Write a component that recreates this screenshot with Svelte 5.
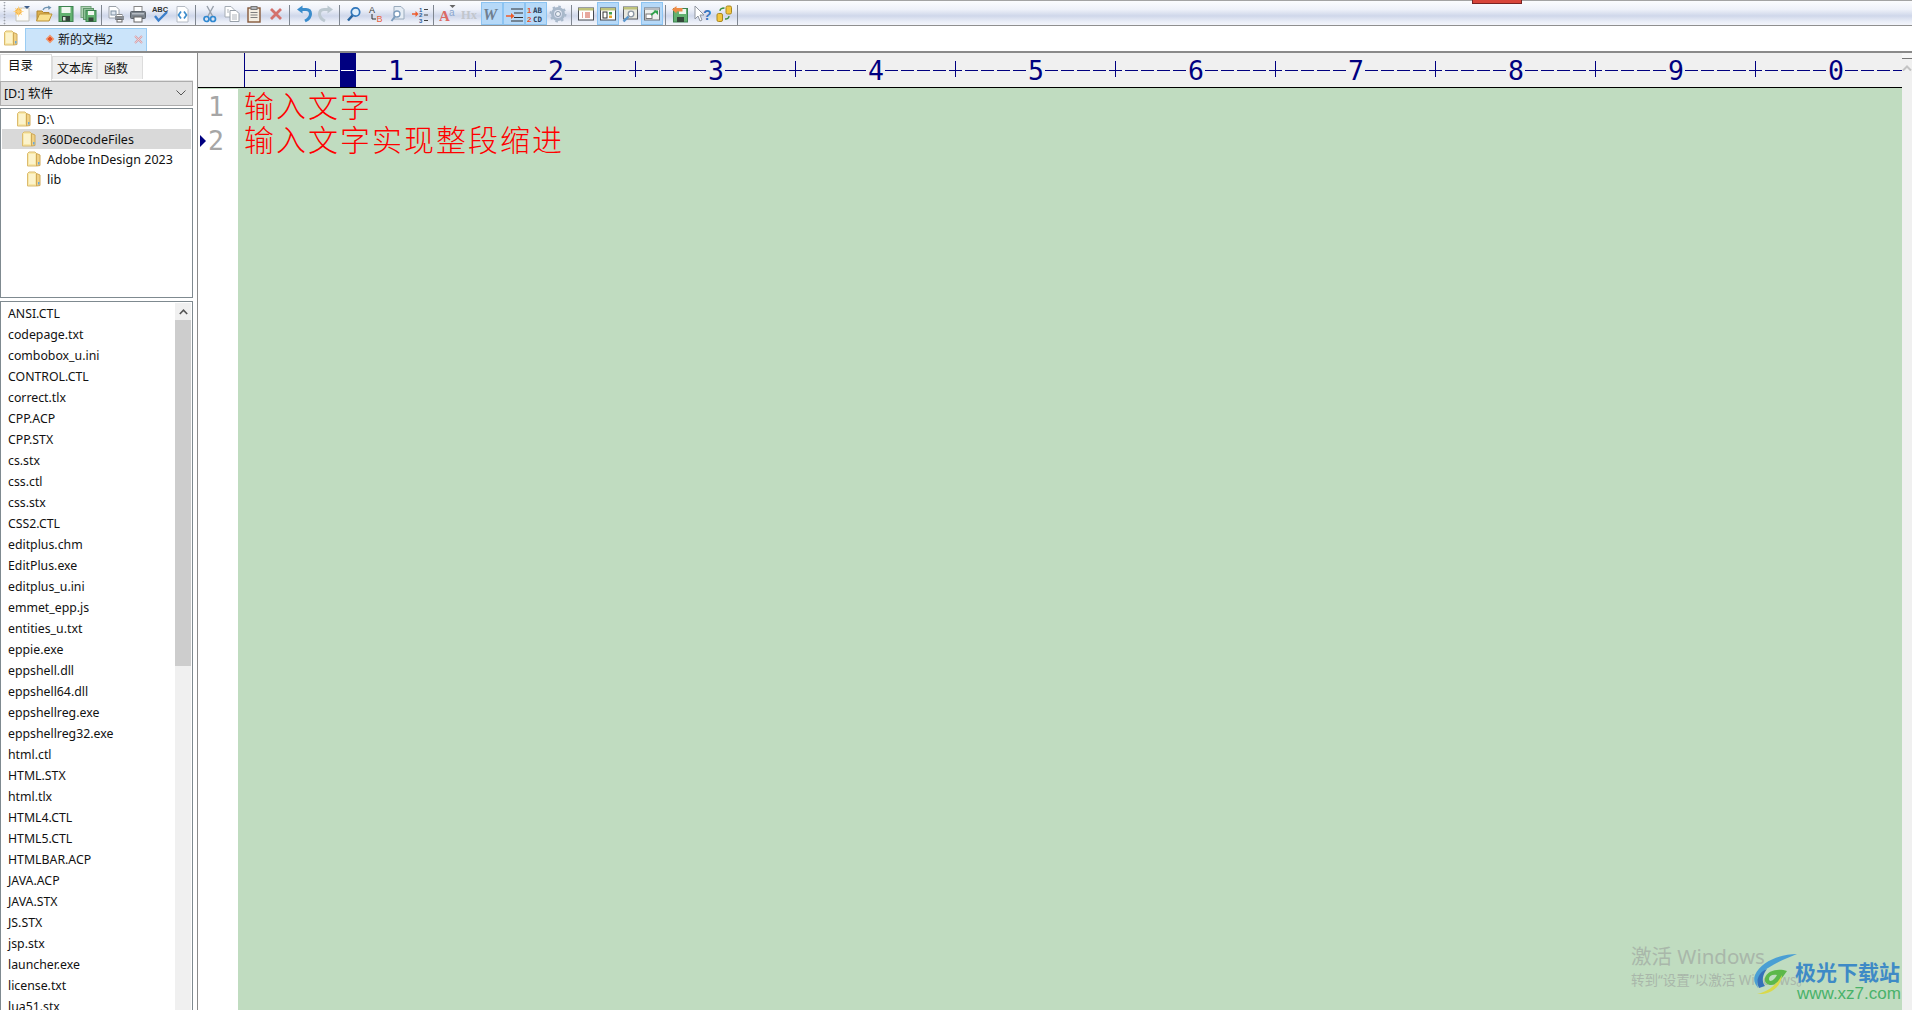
<script>
  // toolbar icons, 18x18 box
  const icons = {
    new: '<path d="M5 3h11v13H3V5z" fill="#fbfbf8" stroke="#c4c4bc"/><path d="M11 1h6l-3 3z" fill="#3f5f8c"/><circle cx="5.500" cy="6.500" r="3.200" fill="#fab548"/><path d="M5.500 1.500v10M.5 6.500h10M2 3l7 7M9 3l-7 7" stroke="#fbd07a" stroke-width=".8"/>',
    open: '<path d="M2 6h5l1.500 1.500H14v8H2z" fill="#dcae4c" stroke="#b08530"/><path d="M4.500 9H17l-3 7H1.500z" fill="#f9e08e" stroke="#bb9236"/><path d="M8 5c1-2.500 3.500-3 6-2.500" fill="none" stroke="#6f94b2" stroke-width="1.300"/><path d="M13 .5l3.500 2-3 2.500z" fill="#6f94b2"/>',
    save: '<rect x="2" y="1.500" width="14" height="15" fill="#62b170" stroke="#3d8350"/><rect x="4.500" y="2" width="9" height="6" fill="#f0f7f0"/><rect x="5" y="11" width="8" height="5.500" fill="#34483b"/><rect x="6" y="12" width="2.500" height="3.500" fill="#d9e3d9"/>',
    saveall: '<rect x="2" y="1.500" width="10" height="11" fill="#b0d2b4" stroke="#74a47e"/><rect x="4.500" y="3.500" width="10" height="11" fill="#8fc298" stroke="#5f9569"/><rect x="7" y="5.500" width="10" height="11" fill="#62b170" stroke="#3d8350"/><rect x="9" y="6" width="6" height="4" fill="#f0f7f0"/><rect x="9.500" y="12.500" width="5" height="4" fill="#34483b"/>',
    preview: '<path d="M2 1.500h7l3 3V13H2z" fill="#fff" stroke="#9aa0a8"/><rect x="4" y="6" width="5" height="4" fill="#dfe6ef" stroke="#7f90a2"/><rect x="8" y="11" width="9" height="4" fill="#8a8f96"/><rect x="10" y="9.500" width="5" height="2" fill="#fff" stroke="#888"/><rect x="10" y="14.500" width="5" height="2.500" fill="#fff" stroke="#666"/>',
    print: '<rect x="5" y="1.500" width="8" height="6" fill="#fff" stroke="#888"/><rect x="1.500" y="6.500" width="15" height="7" rx="1" fill="#7d858e" stroke="#5c636b"/><rect x="3" y="8" width="12" height="1.500" fill="#b6bcc3"/><rect x="5" y="12" width="8" height="5" fill="#fff" stroke="#666"/>',
    spell: '<text x="9" y="7" text-anchor="middle" font-family="Liberation Sans" font-size="7.500" font-weight="700" fill="#333">ABC</text><path d="M4 11l3.500 4.500L16 7" fill="none" stroke="#3c7fcb" stroke-width="2.400"/>',
    browser: '<path d="M4 1.500h8l3 3V17H4z" fill="#fff" stroke="#b4bac3"/><path d="M8 6.500L5.500 10 8 13.500M11 6.500l2.500 3.500-2.500 3.500" fill="none" stroke="#3b8bcc" stroke-width="1.700"/>',
    cut: '<path d="M12.500 1L7 11M6 1l5.500 10" stroke="#98a0aa" stroke-width="1.400"/><circle cx="5.500" cy="14" r="2.500" fill="none" stroke="#2f88d0" stroke-width="1.700"/><circle cx="12" cy="14" r="2.500" fill="none" stroke="#2f88d0" stroke-width="1.700"/>',
    copy: '<path d="M2 1.500h6l3 3V12H2z" fill="#fff" stroke="#a5acb4"/><path d="M7 5.500h6l3 3v8H7z" fill="#fff" stroke="#98a0a9"/><path d="M9 10h5M9 12h5M9 14h5M4 5h2M4 7h2" stroke="#afb5bc"/>',
    paste: '<rect x="3" y="3" width="12" height="14" fill="#f5efe3" stroke="#86593a" stroke-width="1.400"/><rect x="6" y="1.500" width="6" height="3" fill="#b1b5bb" stroke="#777"/><path d="M5.500 7.500h7M5.500 10h7M5.500 12.500h7" stroke="#808080"/>',
    del: '<path d="M4 4l10 10M14 4L4 14" stroke="#d4716c" stroke-width="2.800"/>',
    undo: '<path d="M6 4.500h5c3 0 4.500 2 4.500 4.500s-1.500 5-5.500 7" fill="none" stroke="#3a8ccc" stroke-width="3"/><path d="M7.500 .5v8L2 4.500z" fill="#3a8ccc"/>',
    redo: '<path d="M12 4.500H7C4 4.500 2.500 6.500 2.500 9s1.500 5 5.500 7" fill="none" stroke="#bcc8d0" stroke-width="3"/><path d="M10.500 .5v8L16 4.500z" fill="#bcc8d0"/>',
    find: '<circle cx="10.500" cy="7" r="4.200" fill="#dfeefb" stroke="#2f76bb" stroke-width="1.700"/><path d="M7.500 10.500L3 15.500" stroke="#26639f" stroke-width="2.500"/>',
    replace: '<text x="2" y="8" font-family="Liberation Sans" font-size="9" fill="#333">A</text><path d="M5 9v5h4" fill="none" stroke="#333"/><text x="9.500" y="17" font-family="Liberation Sans" font-size="9" fill="#e8623c">B</text>',
    findfiles: '<path d="M5 1.500h7l3 3V14H5z" fill="#e6edf5" stroke="#9aabbc"/><circle cx="8" cy="9" r="3" fill="#fff" stroke="#7c9cbc" stroke-width="1.300"/><path d="M6 11.500l-3.500 4.500" stroke="#7c9cbc" stroke-width="2"/>',
    goto: '<path d="M1 9h4" stroke="#ee5a2a" stroke-width="1.500"/><path d="M4.500 6l3 3-3 3z" fill="#ee5a2a"/><text x="8" y="6.500" font-family="Liberation Sans" font-size="6" font-weight="700" fill="#2d5d99">1</text><text x="8" y="12" font-family="Liberation Sans" font-size="6" font-weight="700" fill="#2d5d99">2</text><text x="8" y="17.500" font-family="Liberation Sans" font-size="6" font-weight="700" fill="#2d5d99">3</text><path d="M13 4.500h4M13 10h4M13 15.500h4" stroke="#444"/>',
    font: '<text x="0" y="16" font-family="Liberation Serif" font-size="15" font-weight="700" fill="#dc6a64">A</text><text x="10" y="11" font-family="Liberation Sans" font-size="10" fill="#8ba6cf">a</text><path d="M10.500 0h6l-3 3z" fill="#666"/>',
    hx: '<text x="0" y="13.500" font-family="Liberation Serif" font-size="12.500" font-weight="700" fill="#c2c6cc">Hx</text>',
    w: '<text x="0" y="14.500" font-family="Liberation Serif" font-size="16" font-style="italic" font-weight="700" fill="#6f7f90">W</text>',
    indent: '<path d="M6 4h12M9 8h9M9 12.500h9M6 16h12" stroke="#333" stroke-width="1.200"/><path d="M1 11h6" stroke="#ee5a2a" stroke-width="1.500"/><path d="M6 8l3.500 3L6 14z" fill="#ee5a2a"/>',
    numbers: '<text x="0" y="8" font-family="Liberation Sans" font-size="8" font-weight="700" fill="#e8542e">1</text><text x="0" y="16.500" font-family="Liberation Sans" font-size="8" font-weight="700" fill="#e8542e">2</text><text x="6" y="8" font-family="DejaVu Sans Mono" font-size="7.500" font-weight="700" fill="#2b3f5c">AB</text><text x="6" y="16.500" font-family="DejaVu Sans Mono" font-size="7.500" font-weight="700" fill="#2b3f5c">CD</text>',
    gear: '<circle cx="9" cy="9" r="5.500" fill="none" stroke="#a8b8ca" stroke-width="3"/><circle cx="9" cy="9" r="7.500" fill="none" stroke="#a8b8ca" stroke-width="2" stroke-dasharray="2.500 3.400"/><circle cx="9" cy="9" r="2.500" fill="#eef2f7" stroke="#8a9aac"/>',
    winlist: '<rect x="1.500" y="3" width="15" height="12" fill="#fff" stroke="#45494f"/><rect x="1.500" y="3" width="15" height="2.500" fill="#bfc37c"/><path d="M5 8h1M5 10h1M5 12h1M8 8h5M8 10h5M8 12h5" stroke="#d0503a"/>',
    winpanes: '<rect x="1.500" y="3" width="15" height="12" fill="#fff" stroke="#45494f"/><rect x="1.500" y="3" width="15" height="2.500" fill="#bfc37c"/><rect x="4" y="7" width="4" height="6" fill="none" stroke="#333"/><rect x="10" y="7" width="3" height="2.500" fill="#46a04f"/><rect x="10" y="10.500" width="3" height="2.500" fill="#e8a52c"/>',
    winfind: '<rect x="2.500" y="2" width="14" height="12" fill="#e8e8e0" stroke="#55595f"/><rect x="2.500" y="2" width="14" height="2.500" fill="#bfc37c"/><circle cx="10" cy="9" r="2.800" fill="#fff" stroke="#8b96a3" stroke-width="1.300"/><path d="M7.500 11.500L2.500 16.500" stroke="#5a97cc" stroke-width="2.400"/>',
    winjump: '<rect x="1.500" y="3" width="15" height="12" fill="#eef0ee" stroke="#6d7176"/><rect x="1.500" y="3" width="15" height="2" fill="#b8bcc0"/><rect x="3" y="9" width="6" height="4.500" fill="#fff" stroke="#777"/><path d="M8 10l5-4" stroke="#2fa24a" stroke-width="1.800"/><path d="M10.500 5.500h4.500V10z" fill="#2fa24a"/>',
    floppy: '<rect x="2.500" y="3.500" width="14" height="13.500" fill="#62b170" stroke="#3d8350"/><rect x="8" y="4" width="7" height="5" fill="#f0f7f0"/><rect x="6" y="12" width="7" height="5" fill="#34483b"/><path d="M1 4.500L5.500 1v2h6v3.500h-6v2z" fill="#ee8a45"/>',
    help: '<path d="M2 1v13l3-3 2 5 2-1-2-5h4z" fill="#fff" stroke="#9096a0"/><text x="10" y="15" font-family="Liberation Sans" font-size="14" font-weight="700" fill="#3a78c0">?</text>',
    cans: '<rect x="11" y="1" width="5.500" height="8" rx="1.500" fill="#f3c63e" stroke="#a88720"/><rect x="2" y="8.500" width="5.500" height="8" rx="1.500" fill="#f3c63e" stroke="#a88720"/><path d="M5 6c0-2 2-3 4.500-3" fill="none" stroke="#3a8f3e" stroke-width="1.300"/><path d="M14 11c0 2-1.500 3-4 3" fill="none" stroke="#3a8f3e" stroke-width="1.300"/>'
  };

  const toolbar = [
    ['new', 'open', 'save', 'saveall'],
    ['preview', 'print', 'spell', 'browser'],
    ['cut', 'copy', 'paste', 'del'],
    ['undo', 'redo'],
    ['find', 'replace', 'findfiles', 'goto'],
    ['font', 'hx', 'w', 'indent', 'numbers', 'gear'],
    ['winlist', 'winpanes', 'winfind', 'winjump'],
    ['floppy', 'help', 'cans']
  ];
  const activeIcons = ['w', 'indent', 'numbers', 'winpanes', 'winjump'];

  const treeRows = [
    { name: 'D:\\', level: 0 },
    { name: '360DecodeFiles', level: 1, selected: true },
    { name: 'Adobe InDesign 2023', level: 2 },
    { name: 'lib', level: 2 }
  ];

  const files = [
    'ANSI.CTL', 'codepage.txt', 'combobox_u.ini', 'CONTROL.CTL', 'correct.tlx', 'CPP.ACP', 'CPP.STX',
    'cs.stx', 'css.ctl', 'css.stx', 'CSS2.CTL', 'editplus.chm', 'EditPlus.exe', 'editplus_u.ini',
    'emmet_epp.js', 'entities_u.txt', 'eppie.exe', 'eppshell.dll', 'eppshell64.dll', 'eppshellreg.exe',
    'eppshellreg32.exe', 'html.ctl', 'HTML.STX', 'html.tlx', 'HTML4.CTL', 'HTML5.CTL', 'HTMLBAR.ACP',
    'JAVA.ACP', 'JAVA.STX', 'JS.STX', 'jsp.stx', 'launcher.exe', 'license.txt', 'lua51.stx'
  ];

  // one ruler cell per column: a digit every 10, a plus every 5
  const ruler = Array.from({ length: 104 }, (_, i) => {
    const n = i + 1;
    if (n % 10 === 0) return { kind: 'digit', text: String((n / 10) % 10) };
    if (n % 5 === 0) return { kind: 'plus' };
    return { kind: i === 6 ? 'caret' : 'dash' };
  });

  const lines = ['输入文字', '输入文字实现整段缩进'];
</script>

{#snippet folder()}
  <svg class="folder" width="14" height="16" viewBox="0 0 14 16">
    <path d="M.5 2.500 2 1h6l1.500 1.500V15H.5z" fill="#f8e8a8" stroke="#dcbb6e" />
    <path d="M9.500 2.500 13 4v10.500l-3.500.5z" fill="#f0d184" stroke="#cfa858" />
    <path d="M2 3h6v10H2z" fill="#fcf3cc" />
    <rect x="11" y="11" width="1.500" height="2.500" fill="#6aaade" />
  </svg>
{/snippet}

<div class="app">
  <div class="toolbar">
    <div class="gripper"></div>
    {#each toolbar as group}
      {#each group as name}
        <div class="tool" class:active={activeIcons.includes(name)}>
          <svg width="18" height="18" viewBox="0 0 18 18">{@html icons[name]}</svg>
        </div>
      {/each}
      <div class="sep"></div>
    {/each}
    <div class="flag"></div>
  </div>

  <div class="tabstrip">
    <div class="strip-folder">{@render folder()}</div>
    <div class="doc-tab">
      <span class="diamond"></span>
      <span class="doc-title">新的文档2</span>
      <svg class="doc-close" width="9" height="9" viewBox="0 0 9 9">
        <path d="M1 1l7 7M8 1L1 8" stroke="#d8a0a8" stroke-width="2" />
        <path d="M1 1l7 7M8 1L1 8" stroke="#f3e3e6" stroke-width=".6" />
      </svg>
    </div>
  </div>

  <div class="body">
    <aside class="side">
      <div class="side-tabs">
        <div class="side-tab current">目录</div>
        <div class="side-tab">文本库</div>
        <div class="side-tab narrow">函数</div>
      </div>

      <div class="combo">
        <span>[D:] 软件</span>
        <svg width="10" height="6" viewBox="0 0 10 6"><path d="M.5.5 5 5 9.500.5" fill="none" stroke="#555" /></svg>
      </div>

      <div class="tree">
        {#each treeRows as row}
          <div class="tree-row level{row.level}" class:selected={row.selected}>
            {@render folder()}
            <span>{row.name}</span>
          </div>
        {/each}
      </div>

      <div class="files">
        <div class="file-names">
          {#each files as file}
            <div class="file">{file}</div>
          {/each}
        </div>
        <div class="scrollbar">
          <div class="scroll-up">
            <svg width="9" height="6" viewBox="0 0 9 6"><path d="M.8 5 4.500 1.200 8.200 5" fill="none" stroke="#555" stroke-width="1.600" /></svg>
          </div>
          <div class="scroll-thumb"></div>
        </div>
      </div>
    </aside>

    <main class="main">
      <div class="editor">
        <div class="ruler">
          {#each ruler as cell, i}
            <div class="col {cell.kind}" class:first={i === 0}>{cell.text ?? ''}</div>
          {/each}
        </div>
        <div class="page">
          <div class="gutter">
            {#each lines as _, i}
              <div class="line-no" class:current={i === 1}>{i + 1}</div>
            {/each}
          </div>
          <div class="text">
            {#each lines as line}
              <div class="line">{line}</div>
            {/each}
          </div>
        </div>
      </div>
      <div class="vscroll">
        <svg width="10" height="6" viewBox="0 0 10 6"><path d="M1 5.500 5 1.500l4 4" fill="none" stroke="#c4c4c4" stroke-width="2" /></svg>
      </div>

      <div class="activate">
        <div class="activate-title">激活 Windows</div>
        <div class="activate-sub">转到“设置”以激活 Windows。</div>
      </div>

      <div class="brand">
        <svg width="44" height="42" viewBox="0 0 44 42">
          <path d="M44 1C28 1 8 8 2 22c-2 5 0 9 3 13-2-8 2-15 10-20C24 9 34 5 44 1z" fill="#4a9fd4" />
          <path d="M6 35c-4-8 0-16 8-19-4 5-6 12-2 17z" fill="#3570b8" />
          <path d="M34 18c-8-3-20-1-22 7-1 4 2 7 6 7 6 0 12-8 16-14z" fill="#5cb84a" />
          <path d="M29 22C24 32 14 39 4 41c12 1 24-6 25-19z" fill="#d9d94a" />
          <path d="M24 22c-5-1-8 1-8 4s4 3 8-4z" fill="#bfdcc0" />
        </svg>
        <div class="brand-text">
          <div class="brand-name">极光下载站</div>
          <div class="brand-url">www.xz7.com</div>
        </div>
      </div>
    </main>
  </div>
</div>

<style>
  :global(body) {
    margin: 0;
    overflow: hidden;
    background: #fff;
  }

  .app {
    width: 1912px;
    height: 1010px;
    display: flex;
    flex-direction: column;
    overflow: hidden;
    font-family: "Noto Sans", "Noto Sans CJK SC", sans-serif;
    font-size: 12px;
    color: #111;
  }

  /* Toolbar */
  .toolbar {
    position: relative;
    height: 23px;
    padding-top: 1px;
    display: flex;
    align-items: stretch;
    flex-shrink: 0;
    border-top: 1px solid #a3a3a3;
    border-bottom: 1px solid #8f8f8f;
    background: linear-gradient(#fbfcfe 0%, #eef1f9 35%, #cfd7ea 62%, #e9edf7 85%, #f3f5fb 100%);
  }

  .gripper {
    width: 11px;
    background: radial-gradient(circle, #a0a4ac 0.8px, transparent 1.1px) 3px 2px / 3px 3px repeat-y;
  }

  .tool {
    width: 22px;
    display: flex;
    align-items: center;
    justify-content: center;
    box-sizing: border-box;
    border: 1px solid transparent;
  }

  .tool.active {
    background: #b6d9f8;
    border-color: #8cc4f2;
  }

  .sep {
    width: 6px;
    position: relative;
  }

  .sep::after {
    content: "";
    position: absolute;
    left: 2px;
    top: 3px;
    bottom: 0;
    width: 1px;
    background: #7f8690;
  }

  .flag {
    position: absolute;
    left: 1472px;
    top: -1px;
    width: 48px;
    height: 3px;
    background: #d8453a;
    border: 1px solid #7a2323;
    border-top: none;
  }

  /* Document tabs */
  .tabstrip {
    height: 23px;
    padding-top: 2px;
    display: flex;
    flex-shrink: 0;
    background: #fff;
    border-bottom: 2px solid #8a8a8a;
  }

  .strip-folder {
    width: 25px;
    padding: 2px 0 0 4px;
    box-sizing: border-box;
  }

  .doc-tab {
    width: 122px;
    box-sizing: border-box;
    display: flex;
    align-items: center;
    padding: 0 0 2px 21px;
    background: #cbe4fa;
    border: 1px solid #9accf3;
    border-bottom: none;
    position: relative;
  }

  .diamond {
    width: 6px;
    height: 6px;
    margin-right: 5px;
    background: #e2502a;
    border: 1px solid #f2b48a;
    box-sizing: border-box;
    transform: rotate(45deg);
  }

  .doc-title {
    font-size: 12px;
  }

  .doc-close {
    position: absolute;
    right: 3px;
    top: 6px;
  }

  /* Left panel */
  .body {
    flex: 1;
    display: flex;
    min-height: 0;
  }

  .side {
    width: 193px;
    margin-right: 4px;
    flex-shrink: 0;
    display: flex;
    flex-direction: column;
    padding-top: 1px;
  }

  .side-tabs {
    height: 27px;
    display: flex;
    align-items: flex-end;
    padding-right: 3px;
    box-shadow: inset 0 -1px 0 #e3e3e3;
  }

  .side-tab {
    height: 23px;
    width: 45px;
    margin-bottom: 2px;
    padding-left: 4px;
    display: flex;
    align-items: center;
    font-size: 12px;
    background: #f0f0f0;
    border: 1px solid #dcdcdc;
    border-bottom: none;
    box-sizing: border-box;
  }

  .side-tab.narrow {
    width: 46px;
    padding-left: 6px;
  }

  .side-tab.current {
    width: 52px;
    height: 27px;
    margin-bottom: 0;
    padding-left: 7px;
    padding-bottom: 7px;
    font-size: 12.500px;
    background: #fff;
  }

  .combo {
    height: 25px;
    box-sizing: border-box;
    display: flex;
    align-items: center;
    justify-content: space-between;
    padding: 0 6px 2px 3px;
    background: #e1e1e1;
    border: 1px solid #adadad;
    font-size: 12.500px;
  }

  .tree {
    height: 190px;
    margin-top: 2px;
    box-sizing: border-box;
    padding: 0 1px 1px;
    border: 1px solid #7f8a90;
  }

  .tree-row {
    height: 20px;
    display: flex;
    align-items: center;
    gap: 6px;
    font-size: 12.500px;
  }

  .tree-row.level0 { padding-left: 15px; }
  .tree-row.level1 { padding-left: 20px; }
  .tree-row.level2 { padding-left: 25px; }

  .tree-row.selected {
    background: #d9d9d9;
  }

  .files {
    flex: 1;
    min-height: 0;
    margin-top: 3px;
    display: flex;
    overflow: hidden;
    border: 1px solid #7f8a90;
    border-bottom: none;
    background: #fff;
  }

  .file-names {
    flex: 1;
    padding: 1px 0 0 7px;
  }

  .file {
    height: 21px;
    line-height: 21px;
    white-space: nowrap;
    font-size: 12.300px;
  }

  .scrollbar {
    width: 16px;
    margin: 1px 1px 0 0;
    background: #f0f0f0;
  }

  .scroll-up {
    height: 17px;
    display: flex;
    align-items: center;
    justify-content: center;
  }

  .scroll-thumb {
    height: 346px;
    background: #cdcdcd;
  }

  /* Editor */
  .main {
    flex: 1;
    display: flex;
    min-width: 0;
    position: relative;
    border-left: 1px solid #8a8a8a;
  }

  .editor {
    flex: 1;
    min-width: 0;
    display: flex;
    flex-direction: column;
  }

  .ruler {
    height: 34px;
    flex-shrink: 0;
    display: flex;
    padding-left: 46px;
    overflow: hidden;
    background: #f0f0f0;
    border-bottom: 1px solid #000;
  }

  .col {
    width: 16px;
    flex-shrink: 0;
    position: relative;
    text-align: center;
    font-family: "DejaVu Sans Mono", monospace;
    font-size: 26.500px;
    line-height: 36px;
    color: #000080;
  }

  .col.dash::after,
  .col.plus::after,
  .col.caret::after {
    content: "";
    position: absolute;
    left: 1px;
    right: 2px;
    top: 17px;
    height: 1px;
    background: #000080;
  }

  .col.plus::before {
    content: "";
    position: absolute;
    left: 7px;
    top: 8px;
    width: 1px;
    height: 16px;
    background: #000080;
  }

  .col.caret {
    background: #000080;
  }

  .col.caret::after {
    background: #fff;
  }

  .col.first::before {
    content: "";
    position: absolute;
    left: 0;
    top: 0;
    bottom: 0;
    width: 1px;
    background: #000080;
  }

  .col.first::after {
    left: 0;
  }

  .page {
    flex: 1;
    min-height: 0;
    display: flex;
    background: #c0dcc0;
  }

  .gutter {
    width: 40px;
    flex-shrink: 0;
    background: #fff;
    padding-top: 1px;
    box-sizing: border-box;
    margin-top: 1px;
  }

  .line-no {
    height: 34px;
    line-height: 34px;
    padding-left: 10px;
    position: relative;
    font-family: "DejaVu Sans Mono", monospace;
    font-size: 26.500px;
    color: #a6a6a6;
  }

  .line-no.current::before {
    content: "";
    position: absolute;
    left: 2px;
    top: 11px;
    border-left: 6px solid #000080;
    border-top: 6px solid transparent;
    border-bottom: 6px solid transparent;
  }

  .text {
    margin-top: -1px;
    padding-left: 6px;
    font-family: "Noto Sans CJK SC", sans-serif;
    font-size: 30px;
    font-weight: 300;
    letter-spacing: 2px;
    color: #ff0000;
  }

  .line {
    height: 34px;
    line-height: 34px;
    white-space: nowrap;
  }

  .vscroll {
    width: 10px;
    flex-shrink: 0;
    background: #f0f0f0;
    box-shadow: inset 0 5px 0 #f6f6f6, inset 0 6px 0 #777;
    padding-top: 12px;
    box-sizing: border-box;
    display: flex;
    justify-content: center;
    align-items: flex-start;
  }

  /* Things that lie over the editor page */
  .activate {
    position: absolute;
    left: 1433px;
    top: 889px;
    color: #a9b7aa;
    font-family: "Noto Sans", "Noto Sans CJK SC", sans-serif;
  }

  .activate-title {
    font-size: 20.500px;
    line-height: 28px;
  }

  .activate-sub {
    font-size: 13.500px;
    line-height: 20px;
  }

  .brand {
    position: absolute;
    left: 1555px;
    top: 900px;
    display: flex;
    align-items: flex-start;
  }

  .brand-text {
    margin: 6px 0 0 -2px;
  }

  .brand-name {
    font-family: "Noto Sans CJK SC", sans-serif;
    font-size: 21px;
    line-height: 24px;
    font-weight: 700;
    color: #3e8ac6;
  }

  .brand-url {
    font-family: "Liberation Sans", sans-serif;
    font-size: 17px;
    line-height: 21px;
    margin-left: 2px;
    color: #49b26a;
  }
</style>
